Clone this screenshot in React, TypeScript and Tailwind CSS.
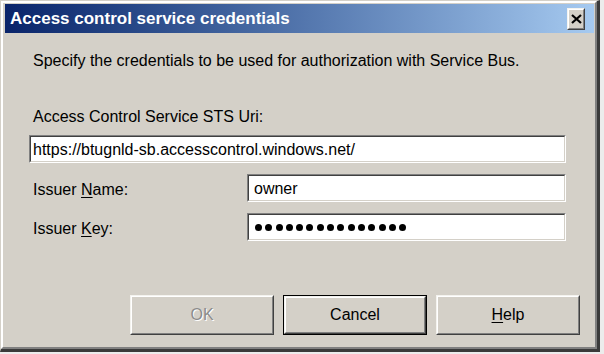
const font = { fontFamily: '"Liberation Sans", Arial, sans-serif' }

type RaisedProps = {
  className?: string
  children?: React.ReactNode
}

function Raised({ className = '', children }: RaisedProps) {
  return (
    <div
      className={`border-t border-l border-r border-b border-t-[#f4f3ef] border-l-[#f4f3ef] border-r-[#404040] border-b-[#404040] ${className}`}
    >
      <div className="flex h-full w-full items-center justify-center border-t border-l border-r border-b border-t-white border-l-white border-r-[#808080] border-b-[#808080] bg-[#d4d0c8]">
        {children}
      </div>
    </div>
  )
}

function Sunken({ className = '', children }: RaisedProps) {
  return (
    <div
      className={`border-t border-l border-r border-b border-t-[#808080] border-l-[#808080] border-r-white border-b-white ${className}`}
    >
      <div className="flex h-full w-full items-center border-t border-l border-r border-b border-t-[#404040] border-l-[#404040] border-r-[#d4d0c8] border-b-[#d4d0c8] bg-white pl-[2px] pt-[1px] text-[16px] leading-[20px] text-black">
        {children}
      </div>
    </div>
  )
}

export default function App() {
  const dots = Array.from({ length: 15 }, (_, i) => i)

  return (
    <div className="h-[354px] w-[604px] bg-[#ececec]" style={font}>
      <div className="h-[352px] w-[600px] border-t border-l border-r-[3px] border-b-[3px] border-t-[#d4d0c8] border-l-[#d4d0c8] border-r-[#3a3a3a] border-b-[#3a3a3a]">
        <div className="flex h-full w-full flex-col border-t-2 border-l-2 border-r-2 border-b-2 border-t-white border-l-white border-r-[#808080] border-b-[#808080] bg-[#d4d0c8] pt-[1px] pl-[2px] pr-[1px]">
          {/* title bar */}
          <div className="flex h-[29px] items-center justify-between bg-linear-to-r from-[#0a246a] to-[#a6caf0]">
            <span className="pl-[5px] text-[17px] font-bold leading-[20px] text-white">
              Access control service credentials
            </span>
            <Raised className="mr-[9px] h-[22px] w-[18px]">
              <svg width="11" height="10" viewBox="0 0 11 10">
                <path d="M1 1 L10 9 M10 1 L1 9" stroke="#000" strokeWidth="2.2" />
              </svg>
            </Raised>
          </div>

          {/* body */}
          <div className="flex flex-col pl-[24px] text-[16px] leading-[20px] text-black">
            <p className="mt-[18px] h-[20px] pl-[4px]">
              Specify the credentials to be used for authorization with Service Bus.
            </p>
            <p className="mt-[36px] h-[20px] pl-[4px]">Access Control Service STS Uri:</p>
            <Sunken className="mt-[8px] h-[28px] w-[537px]">
              https://btugnld-sb.accesscontrol.windows.net/
            </Sunken>

            <div className="mt-[11px] flex h-[28px] items-start">
              <span className="w-[218px] pt-[6px] pl-[4px]">
                Issuer <u className="underline-offset-2">N</u>ame:
              </span>
              <Sunken className="h-[28px] w-[319px]">
                <span className="pl-[3px]">owner</span>
              </Sunken>
            </div>

            <div className="mt-[11px] flex h-[28px] items-start">
              <span className="w-[218px] pt-[6px] pl-[4px]">
                Issuer <u className="underline-offset-2">K</u>ey:
              </span>
              <Sunken className="h-[28px] w-[319px]">
                <div className="flex gap-[3.3px] pl-[4px]">
                  {dots.map((d) => (
                    <span key={d} className="h-[7px] w-[7px] rounded-full bg-black" />
                  ))}
                </div>
              </Sunken>
            </div>

            <div className="mt-[54px] flex w-[551px] justify-end gap-[9px]">
              <Raised className="h-[40px] w-[144px]">
                <span className="text-[#8c8c8c] [text-shadow:1px_1px_0_#ffffff]">OK</span>
              </Raised>
              <div className="h-[40px] w-[144px] border border-black">
                <Raised className="h-full w-full">
                  <span>Cancel</span>
                </Raised>
              </div>
              <Raised className="h-[40px] w-[144px]">
                <span>
                  <u className="underline-offset-2">H</u>elp
                </span>
              </Raised>
            </div>
          </div>
        </div>
      </div>
    </div>
  )
}
